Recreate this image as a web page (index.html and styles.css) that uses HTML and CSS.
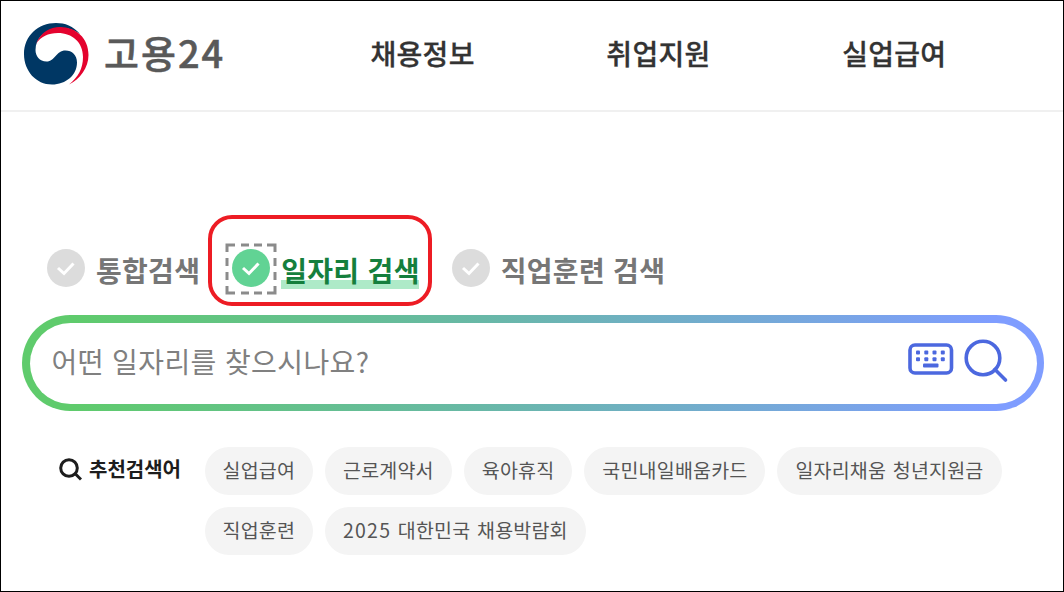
FILE: index.html
```html
<!DOCTYPE html>
<html lang="ko">
<head>
<meta charset="UTF-8">
<meta name="viewport" content="width=device-width, initial-scale=1.0">
<title>고용24</title>
<link rel="stylesheet" href="styles.css">
</head>
<body>

<div class="page">
  <header class="header">
    <a class="logo">
      <svg class="logo-mark" width="66" height="64" viewBox="0 0 66 64">
        <path fill="#003764" d="M57 12C50 4 42 1 33 1C15 1 1 14 1 32C1 49 13 62.500 29 62.500C43 62.500 54 53 54 40.500C54 33 49 28.500 42.500 28.500C33 28.500 32 39.500 23.500 39.500C16.500 39.500 12.500 34 12.500 28C12.500 16 22 8 34 6C42 5 50 7 57 12Z"/>
        <path fill="#e4032e" d="M13 22C18 10 27 5 37 5C53 5 65.500 16 65.500 33C65.500 46 57 57 46 62.500C55 55 60 47 60 35C60 20 49 11 35 11C25 11 18 14.500 13 22Z"/>
      </svg>
      <span class="logo-text">고용24</span>
    </a>
    <nav class="nav">
      <a>채용정보</a>
      <a>취업지원</a>
      <a>실업급여</a>
    </nav>
  </header>

  <main class="main">
    <div class="tabs">
      <div class="tab">
        <svg class="check" viewBox="0 0 38 38"><circle cx="19" cy="19" r="19"/><path d="M11 19L17 24.500L26.500 14.500"/></svg>
        <span class="tab-label">통합검색</span>
      </div>
      <div class="tab active">
        <svg class="focus" width="52" height="52" viewBox="0 0 52 52"><path d="M2 9V2H10M16 2H24M29 2H37M42 2H50V9M50 15V23M50 29V37M50 43V50H42M37 50H29M24 50H16M10 50H2V43M2 37V29M2 23V15"/></svg>
        <svg class="check" viewBox="0 0 38 38"><circle cx="19" cy="19" r="19"/><path d="M11 19L17 24.500L26.500 14.500"/></svg>
        <span class="tab-label">일자리 검색</span>
        <span class="marker"></span>
      </div>
      <div class="tab">
        <svg class="check" viewBox="0 0 38 38"><circle cx="19" cy="19" r="19"/><path d="M11 19L17 24.500L26.500 14.500"/></svg>
        <span class="tab-label">직업훈련 검색</span>
      </div>
    </div>

    <div class="search">
      <div class="search-inner">
        <span class="placeholder">어떤 일자리를 찾으시나요?</span>
        <svg class="keyboard" width="46" height="32" viewBox="0 0 46 32">
          <rect x="2" y="2" width="41.500" height="28" rx="5" fill="none" stroke="#4c68df" stroke-width="3.600"/>
          <g fill="#4c68df">
            <rect x="8" y="7.500" width="4" height="4" rx="1"/><rect x="16.300" y="7.500" width="4" height="4" rx="1"/><rect x="24.500" y="7.500" width="4" height="4" rx="1"/><rect x="32.800" y="7.500" width="4" height="4" rx="1"/>
            <rect x="8" y="14.300" width="4" height="4" rx="1"/><rect x="16.300" y="14.300" width="4" height="4" rx="1"/><rect x="24.500" y="14.300" width="4" height="4" rx="1"/><rect x="32.800" y="14.300" width="4" height="4" rx="1"/>
            <rect x="15" y="20.500" width="15.500" height="4" rx="1"/>
          </g>
        </svg>
        <svg class="magnifier" width="46" height="46" viewBox="0 0 46 46" fill="none" stroke="#4c68df" stroke-width="3.600" stroke-linecap="round"><circle cx="20" cy="20" r="16.800"/><path d="M32 31.500L42.500 42"/></svg>
      </div>
    </div>

    <div class="keywords">
      <div class="keywords-title">
        <svg width="24" height="24" viewBox="0 0 24 24" fill="none" stroke="#1d1d1d" stroke-width="3"><circle cx="11" cy="11" r="8.300"/><path d="M17 16.500L23 22.500"/></svg>
        <span>추천검색어</span>
      </div>
      <div class="chips">
        <span class="chip">실업급여</span>
        <span class="chip">근로계약서</span>
        <span class="chip">육아휴직</span>
        <span class="chip">국민내일배움카드</span>
        <span class="chip">일자리채움 청년지원금</span>
        <span class="chip">직업훈련</span>
        <span class="chip"><span class="year">2025</span> 대한민국 채용박람회</span>
      </div>
    </div>
  </main>
</div>

</body>
</html>
```
FILE: styles.css
```css
* {
  box-sizing: border-box;
}
body {
  margin: 0;
  background-color: #fff;
  font-family: "Noto Sans CJK KR", "Noto Sans", sans-serif;
  white-space: nowrap;
}
.page {
  width: 1064px;
  height: 592px;
  border: 1px solid #000;
  overflow: hidden;
}
.header {
  display: flex;
  align-items: center;
  height: 111px;
  padding: 0 0 5px 22px;
  border-bottom: 2px solid #f0f0f0;
}
.logo {
  display: flex;
  align-items: center;
  width: 347.500px;
}
.logo-mark {
  margin-top: 2px;
}
.logo-text {
  margin: -3px 0 0 15px;
  font-size: 38px;
  font-weight: 500;
  line-height: 50px;
  letter-spacing: 2px;
  color: #595959;
  -webkit-text-stroke: 0.5px #595959;
}
.nav {
  display: flex;
  gap: 131.600px;
  font-size: 28px;
  font-weight: 500;
  line-height: 40px;
  letter-spacing: 0.300px;
  color: #333;
  -webkit-text-stroke: 0.3px #333;
}
.main {
  padding: 130px 19px 0 21px;
}
.tabs {
  display: flex;
  height: 52px;
  padding-left: 25px;
}
.tab {
  position: relative;
  display: flex;
  align-items: center;
  gap: 11px;
  height: 52px;
  margin-right: 32px;
  color: #767676;
}
.tab-label {
  position: relative;
  z-index: 1;
  margin-top: 4px;
  font-size: 28px;
  font-weight: 700;
  line-height: 40px;
  letter-spacing: 0.3px;
}
.check {
  width: 38px;
  height: 38px;
  fill: #dcdcdc;
}
.check path {
  fill: none;
  stroke: #fff;
  stroke-width: 3;
}
.tab.active {
  color: #157f3d;
}
.tab.active .check {
  fill: #61d394;
}
.focus {
  position: absolute;
  left: -7px;
  top: 1px;
  fill: none;
  stroke: #8b8b8b;
  stroke-width: 3;
}
/* green highlight behind the selected label */
.marker {
  position: absolute;
  right: 1px;
  bottom: 5px;
  width: 138px;
  height: 9px;
  background-color: #aeeac8;
}
/* red callout frame */
.tab.active::after {
  content: "";
  box-sizing: border-box;
  position: absolute;
  left: -24px;
  top: -27px;
  width: 224px;
  height: 91px;
  border: 4px solid #ed1c24;
  border-radius: 24px;
}
.search {
  height: 96px;
  margin-top: 21px;
  padding: 7.500px;
  border-radius: 48px;
  background: linear-gradient(90deg, #5fcb6c 5%, #68b8a7 45%, #7f9dff 95%);
}
.search-inner {
  display: flex;
  align-items: center;
  height: 100%;
  padding: 0 28px 0 22px;
  border-radius: 41px;
  background-color: #fff;
}
.placeholder {
  flex: 1;
  margin-top: -4px;
  font-size: 28px;
  line-height: 40px;
  letter-spacing: 0.400px;
  color: #808080;
}
.keyboard {
  margin: -8px 9px 0 0;
}
.magnifier {
  margin-top: -5px;
}
.keywords {
  display: flex;
  margin-top: 36px;
  padding-left: 36px;
}
.keywords-title {
  display: flex;
  align-items: center;
  gap: 7px;
  width: 146.500px;
  height: 46px;
  padding-bottom: 2px;
  font-size: 20px;
  font-weight: 700;
  color: #1d1d1d;
}
.keywords-title span {
  margin-top: -2px;
}
.chips {
  display: flex;
  flex-wrap: wrap;
  gap: 12px;
  flex: 1;
}
.chip {
  height: 48px;
  padding: 0 18px;
  border-radius: 24px;
  background-color: #f4f4f4;
  font-size: 19.500px;
  line-height: 46px;
  letter-spacing: 0.200px;
  word-spacing: 1px;
  color: #555;
}
.year {
  letter-spacing: 1.200px;
}
```
